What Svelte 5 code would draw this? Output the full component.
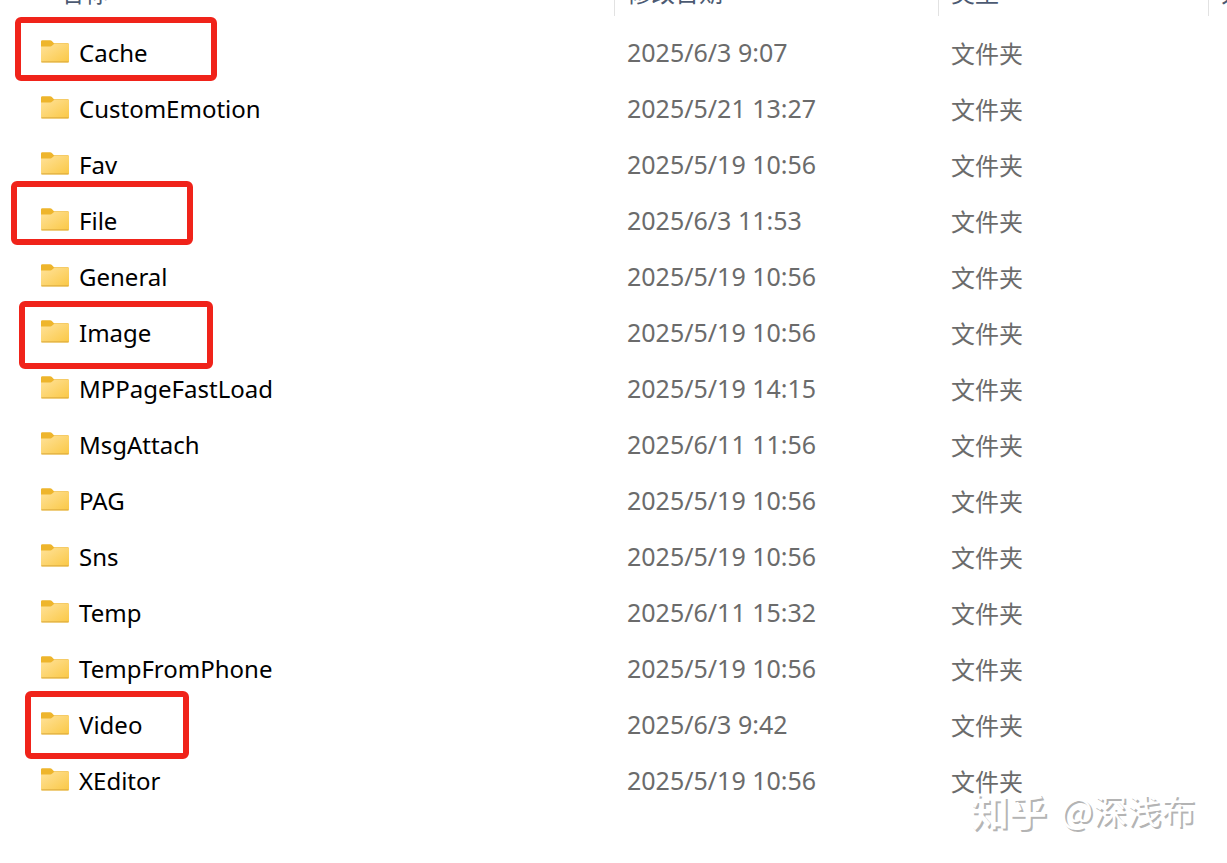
<script lang="ts">
  type Entry = { name: string; modified: string };
  type Mark = { left: number; top: number; width: number; height: number };

  const entries: Entry[] = [
    { name: "Cache", modified: "2025/6/3 9:07" },
    { name: "CustomEmotion", modified: "2025/5/21 13:27" },
    { name: "Fav", modified: "2025/5/19 10:56" },
    { name: "File", modified: "2025/6/3 11:53" },
    { name: "General", modified: "2025/5/19 10:56" },
    { name: "Image", modified: "2025/5/19 10:56" },
    { name: "MPPageFastLoad", modified: "2025/5/19 14:15" },
    { name: "MsgAttach", modified: "2025/6/11 11:56" },
    { name: "PAG", modified: "2025/5/19 10:56" },
    { name: "Sns", modified: "2025/5/19 10:56" },
    { name: "Temp", modified: "2025/6/11 15:32" },
    { name: "TempFromPhone", modified: "2025/5/19 10:56" },
    { name: "Video", modified: "2025/6/3 9:42" },
    { name: "XEditor", modified: "2025/5/19 10:56" },
  ];

  // hand-drawn highlight boxes lying over the list
  const marks: Mark[] = [
    { left: 15, top: 17, width: 202, height: 64 },
    { left: 11, top: 181, width: 182, height: 64 },
    { left: 19, top: 301, width: 194, height: 68 },
    { left: 25, top: 691, width: 164, height: 68 },
  ];
</script>

<main>
  <table>
    <colgroup>
      <col />
      <col class="col-date" />
      <col class="col-type" />
      <col class="col-size" />
    </colgroup>
    <thead>
      <tr>
        <th class="first"><div>名称</div></th>
        <th><div>修改日期</div></th>
        <th><div>类型</div></th>
        <th><div>大小</div></th>
      </tr>
    </thead>
    <tbody>
      {#each entries as entry (entry.name)}
        <tr>
          <td class="name">
            <div>
              <svg width="30" height="24" viewBox="0 0 30 24" aria-hidden="true">
                <defs>
                  <linearGradient id="front" x1="0" y1="0" x2="1" y2="1">
                    <stop offset="0" stop-color="#ffe29a" />
                    <stop offset="1" stop-color="#fac845" />
                  </linearGradient>
                </defs>
                <path
                  d="M1 1.6Q1 0.2 2.4 0.2H10.2Q11 0.2 11.6 0.8L14 3.2H27.6Q29 3.2 29 4.6V12H1Z"
                  fill="#eeb52c"
                />
                <path
                  d="M1 6.4H10.4Q11.4 6.4 12 5.8L13.4 4.4Q14 3.8 14.8 3.8H28Q29 3.8 29 4.8V21.2Q29 22.4 27.8 22.4H2.2Q1 22.4 1 21.2Z"
                  fill="url(#front)"
                />
                <path d="M1.4 21.9H28.6" stroke="#d9a93c" fill="none" />
              </svg>
              <span>{entry.name}</span>
            </div>
          </td>
          <td>{entry.modified}</td>
          <td class="type">文件夹</td>
          <td></td>
        </tr>
      {/each}
    </tbody>
  </table>

  {#each marks as mark}
    <div
      class="mark"
      style="left: {mark.left}px; top: {mark.top}px; width: {mark.width}px; height: {mark.height}px"
    ></div>
  {/each}

  <p class="watermark"><b>知乎</b><span>@深浅布</span></p>
</main>

<style>
  :global(body) {
    margin: 0;
    background: #fff;
  }
  main {
    position: relative;
    min-height: 100vh;
    overflow: hidden;
    font-family: "Noto Sans", "Noto Sans CJK SC", sans-serif;
    font-size: 25px;
    color: #6b6b6b;
  }
  table {
    width: 100%;
    table-layout: fixed;
    border-collapse: separate;
    border-spacing: 0;
  }
  .col-date {
    width: 324px;
  }
  .col-type {
    width: 270px;
  }
  .col-size {
    width: 18px;
  }
  th {
    height: 25px;
    padding: 0;
    vertical-align: top;
    font-family: "Noto Sans CJK SC", sans-serif;
    font-size: 24px;
    font-weight: 400;
    color: #4c5a72;
  }
  th div {
    display: flex;
    align-items: flex-end;
    height: 16px;
    padding-left: 12px;
    box-sizing: border-box;
    border-right: 1px solid #e2e2e2;
    line-height: 48px;
    white-space: nowrap;
    overflow: hidden;
  }
  th:last-child div {
    border-right: 0;
  }
  th.first div {
    padding-left: 60px;
  }
  td {
    height: 56px;
    padding: 0 0 2px 12px;
    box-sizing: border-box;
    line-height: 34px;
    white-space: nowrap;
  }
  td.name {
    padding-left: 40px;
    padding-bottom: 0;
    font-size: 24px;
    color: #000;
  }
  td.type {
    padding-bottom: 0;
    font-family: "Noto Sans CJK SC", sans-serif;
    font-size: 24px;
  }
  .name div {
    display: flex;
    align-items: center;
    gap: 9px;
  }
  .name svg {
    margin-bottom: 2px;
  }
  .mark {
    position: absolute;
    box-sizing: border-box;
    border: 6px solid #f0231a;
    border-radius: 6px;
  }
  .watermark {
    position: absolute;
    right: 32px;
    bottom: 28px;
    display: flex;
    align-items: center;
    gap: 14px;
    margin: 0;
    font-family: "Noto Sans CJK SC", sans-serif;
    font-size: 34px;
    line-height: 50px;
    color: #fff;
    text-shadow: 2px 2px 0 #b4b4b4;
  }
  .watermark b {
    font-size: 38px;
    font-weight: 700;
  }
</style>
